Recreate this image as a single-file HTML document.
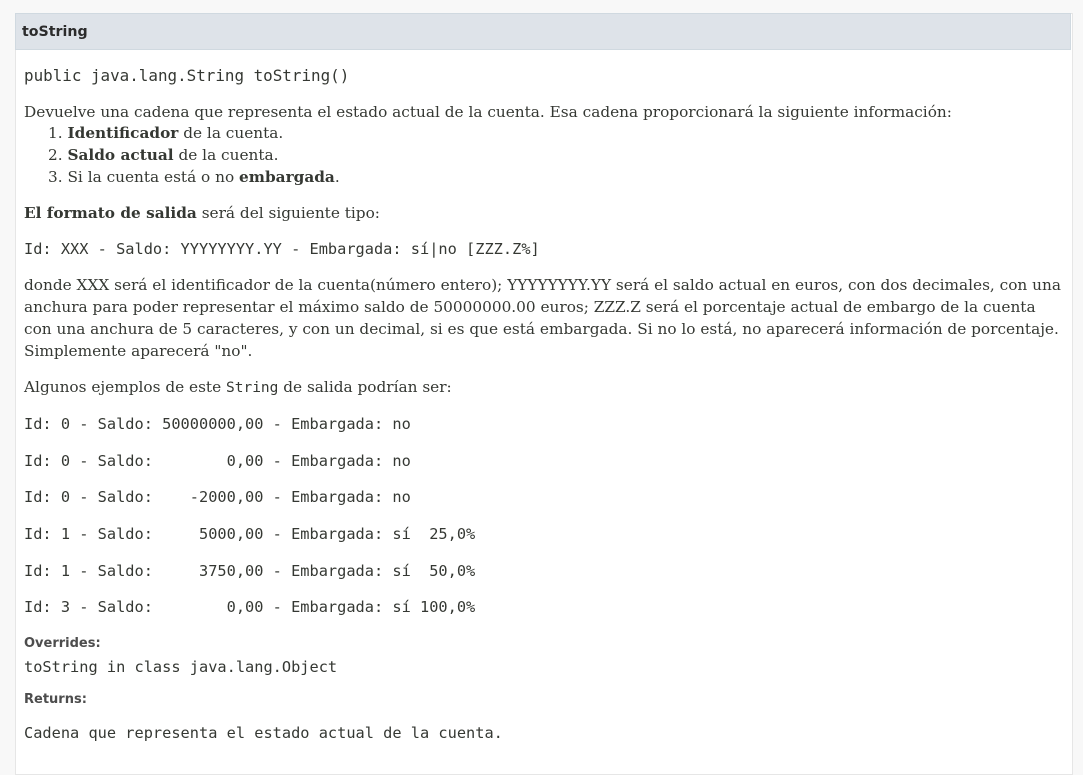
<!DOCTYPE html>
<html><head><meta charset="utf-8"><style>
html,body{margin:0;padding:0;width:1083px;height:753px;overflow:hidden;background:#f8f8f8}
.box{position:absolute;left:15px;top:13px;width:1056px;height:760px;background:#fff;border:1px solid #e6e6e6}
.hd{position:absolute;left:15px;top:13px;width:1056px;height:37px;background:#dee3e9;border:1px solid #d0d9e0;box-sizing:border-box}
.l{position:absolute;left:24px;white-space:nowrap;color:#353833;line-height:20px}
.s{font-family:"DejaVu Serif","Liberation Serif",serif;font-size:15.3px}
.m{font-family:"DejaVu Sans Mono","Liberation Mono",monospace;font-size:15.3px;white-space:pre}
.h{font-family:"DejaVu Sans","Liberation Sans",sans-serif;font-weight:bold;font-size:13px;color:#4d4d4d}
.m2{font-family:"DejaVu Sans Mono","Liberation Mono",monospace;font-size:14.5px}
b{font-weight:bold}
</style></head><body>
<div class="box"></div>
<div class="hd"></div>
<div class="l h" style="left:22px;top:22px;font-size:14.2px;color:#2c2c2c">toString</div>
<div class="l m" style="top:66px;font-size:15.9px">public java.lang.String toString()</div>
<div class="l s" style="top:102px">Devuelve una cadena que representa el estado actual de la cuenta. Esa cadena proporcionará la siguiente información:</div>
<div class="l s" style="top:123px;left:48px">1. <b>Identificador</b> de la cuenta.</div>
<div class="l s" style="top:145px;left:48px">2. <b>Saldo actual</b> de la cuenta.</div>
<div class="l s" style="top:167px;left:48px">3. Si la cuenta está o no <b>embargada</b>.</div>
<div class="l s" style="top:203px"><b>El formato de salida</b> será del siguiente tipo:</div>
<div class="l m" style="top:239px">Id: XXX - Saldo: YYYYYYYY.YY - Embargada: sí|no [ZZZ.Z%]</div>
<div class="l s" style="top:275px">donde XXX será el identificador de la cuenta(número entero); YYYYYYYY.YY será el saldo actual en euros, con dos decimales, con una</div>
<div class="l s" style="top:297px">anchura para poder representar el máximo saldo de 50000000.00 euros; ZZZ.Z será el porcentaje actual de embargo de la cuenta</div>
<div class="l s" style="top:319px">con una anchura de 5 caracteres, y con un decimal, si es que está embargada. Si no lo está, no aparecerá información de porcentaje.</div>
<div class="l s" style="top:341px">Simplemente aparecerá "no".</div>
<div class="l s" style="top:377px">Algunos ejemplos de este <span class="m2">String</span> de salida podrían ser:</div>
<div class="l m" style="top:414px">Id: 0 - Saldo: 50000000,00 - Embargada: no</div>
<div class="l m" style="top:451px">Id: 0 - Saldo:        0,00 - Embargada: no</div>
<div class="l m" style="top:487px">Id: 0 - Saldo:    -2000,00 - Embargada: no</div>
<div class="l m" style="top:524px">Id: 1 - Saldo:     5000,00 - Embargada: sí  25,0%</div>
<div class="l m" style="top:561px">Id: 1 - Saldo:     3750,00 - Embargada: sí  50,0%</div>
<div class="l m" style="top:597px">Id: 3 - Saldo:        0,00 - Embargada: sí 100,0%</div>
<div class="l h" style="top:634px">Overrides:</div>
<div class="l m" style="top:657px">toString in class java.lang.Object</div>
<div class="l h" style="top:690px">Returns:</div>
<div class="l m" style="top:723px">Cadena que representa el estado actual de la cuenta.</div>
</body></html>
